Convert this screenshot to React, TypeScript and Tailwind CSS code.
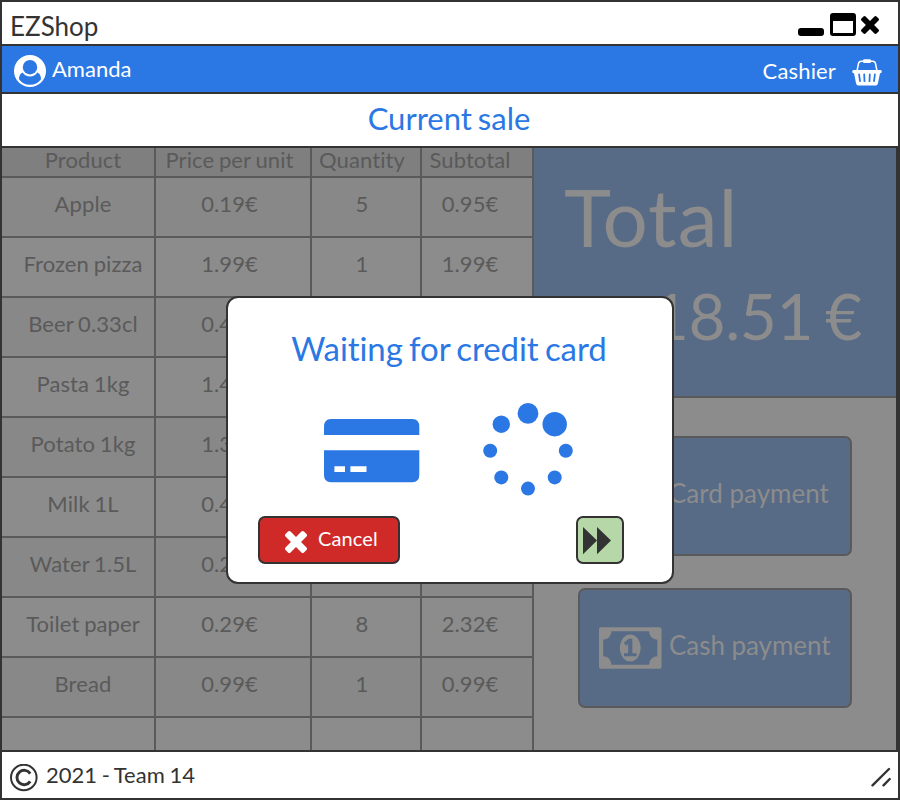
import React from "react";

type Row = [string, string, string, string];

const rows: Row[] = [
  ["Apple", "0.19€", "5", "0.95€"],
  ["Frozen pizza", "1.99€", "1", "1.99€"],
  ["Beer 0.33cl", "0.45€", "6", "2.70€"],
  ["Pasta 1kg", "1.49€", "2", "2.98€"],
  ["Potato 1kg", "1.39€", "2", "2.78€"],
  ["Milk 1L", "0.49€", "4", "1.96€"],
  ["Water 1.5L", "0.29€", "6", "1.74€"],
  ["Toilet paper", "0.29€", "8", "2.32€"],
  ["Bread", "0.99€", "1", "0.99€"],
  ["", "", "", ""],
];

const columnPadding = ["pl-[10px]", "pr-[7px]", "pr-[8px]", "pr-[14px]"];

function Cross({ className }: { className: string }) {
  return (
    <svg viewBox="302 366 1188 1188" className={className} fill="currentColor">
      <path d="M1490 1322q0 40-28 68l-136 136q-28 28-68 28t-68-28l-294-294-294 294q-28 28-68 28t-68-28l-136-136q-28-28-28-68t28-68l294-294-294-294q-28-28-28-68t28-68l136-136q28-28 68-28t68 28l294 294 294-294q28-28 68-28t68 28l136 136q28 28 28 68t-28 68l-294 294 294 294q28 28 28 68z" />
    </svg>
  );
}

function UserIcon() {
  return (
    <svg viewBox="0 0 32 32" className="h-8 w-8 shrink-0">
      <circle cx="16" cy="16" r="16" fill="#fff" />
      <path d="M5 24.200C5 21 6.200 18.300 8.600 17.500C10.400 20 13 21.400 16 21.400C19 21.400 21.600 20 23.400 17.500C25.800 18.300 27 21 27 24.200C24.300 27.800 20.500 29.800 16 29.800C11.500 29.800 7.700 27.800 5 24.200Z" fill="#2b78e4" />
      <circle cx="16" cy="12.200" r="7.200" fill="#2b78e4" />
    </svg>
  );
}

function BasketIcon() {
  return (
    <svg viewBox="0 0 30 27" className="h-[27px] w-[30px] shrink-0">
      <path d="M5 12L6.500 4.500Q7 2.200 9.200 2.200H20.800Q23 2.200 23.500 4.500L25 12" fill="none" stroke="#fff" strokeWidth="1.500" />
      <rect x="11" y="0.300" width="8" height="3.700" rx="1.200" fill="#fff" />
      <path d="M1.500 11H28.500Q29.800 11 29.800 12.600T28.500 14.200H28L25.900 24.500Q25.500 26.500 23.700 26.500H6.300Q4.500 26.500 4.100 24.500L2 14.200H1.500Q.2 14.200 .2 12.600T1.500 11Z" fill="#fff" />
      <path d="M7.100 15.500L8 22.200M12.200 15.500L12.500 22.200M17.800 15.500L17.500 22.200M22.900 15.500L22 22.200" stroke="#2b78e4" strokeWidth="1.800" strokeLinecap="round" />
    </svg>
  );
}

function MoneyIcon() {
  return (
    <svg viewBox="0 256 1920 1280" className="h-[42px] w-[62.5px] shrink-0" fill="currentColor">
      <path d="M768 1152h384v-96h-128v-448h-114l-148 137 77 80q42-37 55-57h2v288h-128v96zm512-256q0 70-21 142t-59.5 134-101.500 101-138 39-138-39-101.500-101-59.500-134-21-142 21-142 59.500-134 101.500-101 138-39 138 39 101.500 101 59.500 134 21 142zm512 256v-512q-106 0-181-75t-75-181h-1152q0 106-75 181t-181 75v512q106 0 181 75t75 181h1152q0-106 75-181t181-75zm128-832v1152q0 26-19 45t-45 19h-1792q-26 0-45-19t-19-45v-1152q0-26 19-45t45-19h1792q26 0 45 19t19 45z" fillRule="evenodd" />
    </svg>
  );
}

function CardIcon({ className }: { className: string }) {
  return (
    <svg viewBox="0 0 96 64" className={className} fill="currentColor">
      <path d="M0 16V8Q0 0 7 0H88.300Q95.300 0 95.300 8V16Z" />
      <path fillRule="evenodd" d="M0 31.300H95.300V56Q95.300 63.300 88.300 63.300H7Q0 63.300 0 56ZM10.400 47.300V53H21V47.300ZM26.400 47.300V53H42.500V47.300Z" />
    </svg>
  );
}

const dots = [
  [45, 10.4, 10.4],
  [71.7, 21.2, 12.2],
  [82.8, 47.8, 7],
  [71.7, 74.4, 7],
  [45, 85.6, 7],
  [18.3, 74.4, 7],
  [7.2, 47.8, 7],
  [18.3, 21.2, 8.7],
];

function WaitingDialog() {
  return (
    <div className="absolute left-[226px] top-[296px] flex h-[288px] w-[448px] flex-col rounded-xl border-2 border-[#333] bg-white text-[#2b78e4]">
      <h2 className="mt-[30px] pr-[2px] text-center text-[33px] leading-10 tracking-[-0.08px] whitespace-nowrap [word-spacing:-2px]">Waiting for credit card</h2>
      <div className="flex h-[148px] items-start pl-24 pt-[35px]">
        <CardIcon className="mt-4 h-16 w-24" />
        <svg viewBox="0 0 90 94" className="ml-[63px] h-[94px] w-[90px]" fill="currentColor">
          {dots.map(([x, y, r], i) => (
            <circle key={i} cx={x} cy={y} r={r} />
          ))}
        </svg>
      </div>
      <div className="flex justify-between pl-[30px] pr-12">
        <button className="flex h-12 w-[142px] items-center rounded-[7px] border-2 border-[#333] bg-[#cf2a27] pl-[24.5px] text-white">
          <Cross className="mt-[3px] h-[22px] w-[22px]" />
          <span className="mb-1 ml-[11.5px] text-[20px] leading-6 tracking-[0.1px]">Cancel</span>
        </button>
        <button className="flex h-12 w-12 items-center rounded-[7px] border-2 border-[#333] bg-[#b6d7a8] pl-[5px]">
          <svg viewBox="0 0 28 28" className="mt-px h-7 w-7" fill="#333">
            <path d="M0 0L14 13.600L0 27.200ZM14 0L28 13.600L14 27.200Z" />
          </svg>
        </button>
      </div>
    </div>
  );
}

export default function App() {
  return (
    <div className="relative flex h-[800px] w-[900px] flex-col overflow-hidden border-2 border-[#333] bg-white font-['Lato',sans-serif] text-[#333] [font-variant-ligatures:none] [word-spacing:-1px]">
      <header className="flex h-11 shrink-0 items-center justify-between border-b-2 border-[#333] pl-2 pr-[19px]">
        <h1 className="mt-[5px] text-[26px] leading-8">EZShop</h1>
        <div className="mt-[3px] flex text-black">
          <span className="mt-[15px] h-2 w-[26px] rounded-[3px] bg-black" />
          <span className="ml-1.5 h-[23px] w-[26px] rounded-[3px] border-[3px] border-t-8 border-black" />
          <Cross className="ml-[5px] mt-[3px] h-[18px] w-[18px]" />
        </div>
      </header>

      <nav className="flex h-12 shrink-0 items-center justify-between border-b-2 border-[#333] bg-[#2b78e4] pl-3 pr-4 text-[22px] leading-7 text-white">
        <div className="flex items-center gap-1.5">
          <div className="mt-[4px]"><UserIcon /></div>
          <span>Amanda</span>
        </div>
        <div className="flex items-center gap-4">
          <span className="mt-[3px] tracking-[0.15px]">Cashier</span>
          <div className="mt-[7px]"><BasketIcon /></div>
        </div>
      </nav>

      <div className="flex h-[54px] shrink-0 items-center justify-center border-b-2 border-[#333] pb-1 pr-0.5 text-[31px] text-[#2b78e4] [word-spacing:-2px]">
        Current sale
      </div>

      <main className="flex h-[604px] shrink-0 border-b-2 border-[#333]">
        <section className="flex w-[532px] shrink-0 flex-col overflow-hidden text-[22px] leading-[26px] tracking-[0.1px] text-[#5a5a5a]">
          <div className="grid h-[30px] shrink-0 grid-cols-[154px_156px_110px_112px] bg-[#7f7f7f] leading-6">
            {["Product", "Price per unit", "Quantity", "Subtotal"].map((label, i) => (
              <div key={label} className={`border-b-2 border-r-2 border-[#5a5a5a] text-center whitespace-nowrap ${columnPadding[i]}`}>
                {label}
              </div>
            ))}
          </div>
          {rows.map((row, r) => (
            <div key={r} className={`grid h-[60px] shrink-0 grid-cols-[154px_156px_110px_112px] ${r % 2 ? "bg-[#8c8c8c]" : "bg-[#888]"}`}>
              {row.map((cell, i) => (
                <div key={i} className={`border-b-2 border-r-2 border-[#5a5a5a] pt-[13px] text-center whitespace-nowrap ${columnPadding[i]}`}>
                  {cell}
                </div>
              ))}
            </div>
          ))}
        </section>

        <aside className="flex grow flex-col border-r-2 border-[#333] bg-[#8c8c8c] text-[#8c8c8c]">
          <div className="flex h-[250px] shrink-0 flex-col border-b-2 border-[#5a5a5a] bg-[#576a86] pl-[30px] pr-[34px]">
            <div className="mt-[20px] text-[80px] leading-[96px] tracking-[1px]">Total</div>
            <div className="mt-[14px] text-right text-[64px] leading-[76px] tracking-[-0.4px] [word-spacing:-4px]">18.51 €</div>
          </div>
          <div className="flex flex-col gap-8 pl-11 pt-[38px] text-[26px] leading-8">
            <button className="flex h-[120px] w-[274px] items-center rounded-[7px] border-2 border-[#5a5a5a] bg-[#576a86] pl-[19px]">
              <CardIcon className="h-[42px] w-[62.5px] shrink-0" />
              <span className="mb-1.5 ml-[7.5px]">Card payment</span>
            </button>
            <button className="flex h-[120px] w-[274px] items-center rounded-[7px] border-2 border-[#5a5a5a] bg-[#576a86] pl-[19px]">
              <MoneyIcon />
              <span className="mb-1.5 ml-[7.5px] tracking-[-0.05px]">Cash payment</span>
            </button>
          </div>
        </aside>
      </main>

      <footer className="flex h-[46px] shrink-0 items-center pl-2 pr-[7px] text-[22px] leading-7">
        <svg viewBox="0 0 28 28" className="mt-[5px] h-7 w-7" fill="none" stroke="#333">
          <circle cx="13.800" cy="13.500" r="12.800" strokeWidth="2" />
          <path d="M20.200 17.400A7.200 7.200 0 1 1 20.200 9.600" strokeWidth="2.900" />
        </svg>
        <span className="ml-2">2021 - Team 14</span>
        <svg viewBox="0 0 20 20" className="ml-auto mt-[4px] h-5 w-5" fill="none" stroke="#333" strokeWidth="2.400" strokeLinecap="round">
          <path d="M1.500 18.300L18 2M12.500 18.300L18.700 12" />
        </svg>
      </footer>

      <div className="absolute -left-0.5 -top-0.5">
        <WaitingDialog />
      </div>
    </div>
  );
}
